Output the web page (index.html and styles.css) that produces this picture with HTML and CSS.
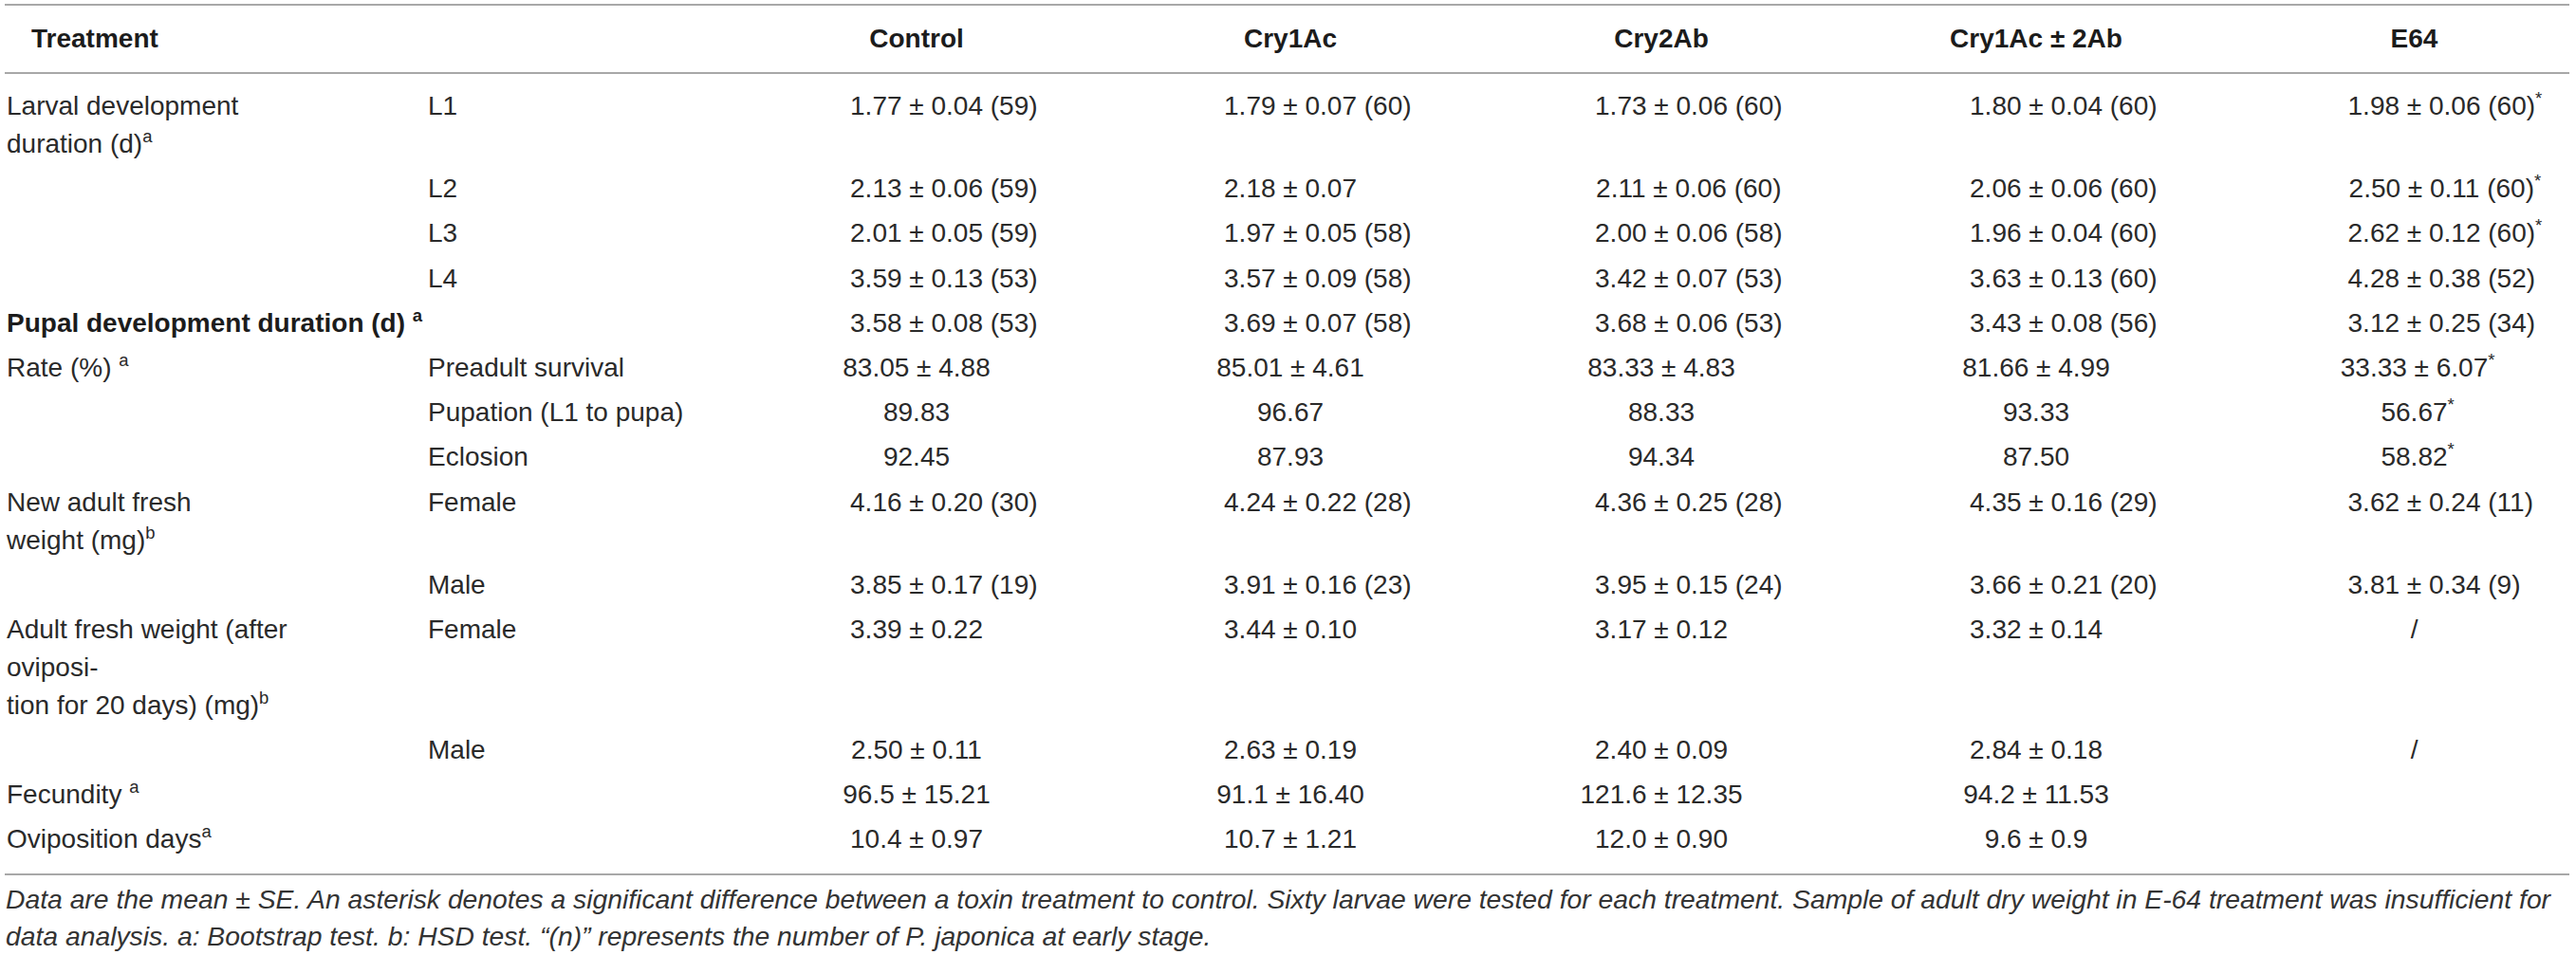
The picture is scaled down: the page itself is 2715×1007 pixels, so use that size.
FILE: index.html
```html
<!DOCTYPE html>
<html>
  <head>
    <meta charset="utf-8" />
    <title>Development of P. japonica under toxin treatments</title>
    <link rel="stylesheet" href="styles.css">
  </head>
  <body>
    <table class="data">
      <colgroup>
        <col class="col-label">
        <col class="col-sub">
        <col class="col-control">
        <col class="col-1ac">
        <col class="col-2ab">
        <col class="col-mix">
        <col class="col-e64">
      </colgroup>
      <thead>
        <tr>
          <th class="treat" colspan="2">Treatment</th>
          <th>Control</th>
          <th>Cry1Ac</th>
          <th>Cry2Ab</th>
          <th>Cry1Ac ± 2Ab</th>
          <th>E64</th>
        </tr>
      </thead>
      <tbody>
        <tr>
          <td class="label">Larval development<br>duration (d)<sup>a</sup></td>
          <td class="sub">L1</td>
          <td>1.77 ± 0.04<span class="n"> (59)</span></td>
          <td>1.79 ± 0.07<span class="n"> (60)</span></td>
          <td>1.73 ± 0.06<span class="n"> (60)</span></td>
          <td>1.80 ± 0.04<span class="n"> (60)</span></td>
          <td>1.98 ± 0.06<span class="n"> (60)<sup>*</sup></span></td>
        </tr>
        <tr>
          <td class="label"></td>
          <td class="sub">L2</td>
          <td>2.13 ± 0.06<span class="n"> (59)</span></td>
          <td>2.18 ± 0.07</td>
          <td>2.11 ± 0.06<span class="n"> (60)</span></td>
          <td>2.06 ± 0.06<span class="n"> (60)</span></td>
          <td>2.50 ± 0.11<span class="n"> (60)<sup>*</sup></span></td>
        </tr>
        <tr>
          <td class="label"></td>
          <td class="sub">L3</td>
          <td>2.01 ± 0.05<span class="n"> (59)</span></td>
          <td>1.97 ± 0.05<span class="n"> (58)</span></td>
          <td>2.00 ± 0.06<span class="n"> (58)</span></td>
          <td>1.96 ± 0.04<span class="n"> (60)</span></td>
          <td>2.62 ± 0.12<span class="n"> (60)<sup>*</sup></span></td>
        </tr>
        <tr>
          <td class="label"></td>
          <td class="sub">L4</td>
          <td>3.59 ± 0.13<span class="n"> (53)</span></td>
          <td>3.57 ± 0.09<span class="n"> (58)</span></td>
          <td>3.42 ± 0.07<span class="n"> (53)</span></td>
          <td>3.63 ± 0.13<span class="n"> (60)</span></td>
          <td>4.28 ± 0.38<span class="n"> (52)</span></td>
        </tr>
        <tr>
          <td class="label strong" colspan="2">Pupal development duration (d) <sup>a</sup></td>
          <td>3.58 ± 0.08<span class="n"> (53)</span></td>
          <td>3.69 ± 0.07<span class="n"> (58)</span></td>
          <td>3.68 ± 0.06<span class="n"> (53)</span></td>
          <td>3.43 ± 0.08<span class="n"> (56)</span></td>
          <td>3.12 ± 0.25<span class="n"> (34)</span></td>
        </tr>
        <tr>
          <td class="label">Rate (%) <sup>a</sup></td>
          <td class="sub">Preadult survival</td>
          <td>83.05 ± 4.88</td>
          <td>85.01 ± 4.61</td>
          <td>83.33 ± 4.83</td>
          <td>81.66 ± 4.99</td>
          <td>33.33 ± 6.07<span class="n"><sup>*</sup></span></td>
        </tr>
        <tr>
          <td class="label"></td>
          <td class="sub">Pupation (L1 to pupa)</td>
          <td>89.83</td>
          <td>96.67</td>
          <td>88.33</td>
          <td>93.33</td>
          <td>56.67<span class="n"><sup>*</sup></span></td>
        </tr>
        <tr>
          <td class="label"></td>
          <td class="sub">Eclosion</td>
          <td>92.45</td>
          <td>87.93</td>
          <td>94.34</td>
          <td>87.50</td>
          <td>58.82<span class="n"><sup>*</sup></span></td>
        </tr>
        <tr>
          <td class="label">New adult fresh<br>weight (mg)<sup>b</sup></td>
          <td class="sub">Female</td>
          <td>4.16 ± 0.20<span class="n"> (30)</span></td>
          <td>4.24 ± 0.22<span class="n"> (28)</span></td>
          <td>4.36 ± 0.25<span class="n"> (28)</span></td>
          <td>4.35 ± 0.16<span class="n"> (29)</span></td>
          <td>3.62 ± 0.24<span class="n"> (11)</span></td>
        </tr>
        <tr>
          <td class="label"></td>
          <td class="sub">Male</td>
          <td>3.85 ± 0.17<span class="n"> (19)</span></td>
          <td>3.91 ± 0.16<span class="n"> (23)</span></td>
          <td>3.95 ± 0.15<span class="n"> (24)</span></td>
          <td>3.66 ± 0.21<span class="n"> (20)</span></td>
          <td>3.81 ± 0.34<span class="n"> (9)</span></td>
        </tr>
        <tr>
          <td class="label">Adult fresh weight (after<br>oviposi-<br>tion for 20 days) (mg)<sup>b</sup></td>
          <td class="sub">Female</td>
          <td>3.39 ± 0.22</td>
          <td>3.44 ± 0.10</td>
          <td>3.17 ± 0.12</td>
          <td>3.32 ± 0.14</td>
          <td>/</td>
        </tr>
        <tr>
          <td class="label"></td>
          <td class="sub">Male</td>
          <td>2.50 ± 0.11</td>
          <td>2.63 ± 0.19</td>
          <td>2.40 ± 0.09</td>
          <td>2.84 ± 0.18</td>
          <td>/</td>
        </tr>
        <tr>
          <td class="label">Fecundity <sup>a</sup></td>
          <td class="sub"></td>
          <td>96.5 ± 15.21</td>
          <td>91.1 ± 16.40</td>
          <td>121.6 ± 12.35</td>
          <td>94.2 ± 11.53</td>
          <td></td>
        </tr>
        <tr>
          <td class="label">Oviposition days<sup>a</sup></td>
          <td class="sub"></td>
          <td>10.4 ± 0.97</td>
          <td>10.7 ± 1.21</td>
          <td>12.0 ± 0.90</td>
          <td>9.6 ± 0.9</td>
          <td></td>
        </tr>
      </tbody>
    </table>

    <p class="note">
      Data are the mean ± SE. An asterisk denotes a significant difference between a toxin treatment to control. Sixty larvae were tested for each treatment. Sample of adult dry weight in E-64 treatment was insufficient for data analysis. a: Bootstrap test. b: HSD test. “(n)” represents the number of P. japonica at early stage.
    </p>
  </body>
</html>
```

FILE: styles.css
```css
body {
  margin: 4px 7px 0 5px;
  font-family: 'Liberation Sans', Arial, sans-serif;
  color: #2A2A2A;
  background-color: #FFFFFF;
}

.data {
  border-collapse: collapse;
  table-layout: fixed;
  width: 2703px;
  border-top: 2px solid #A8A8A8;
  border-bottom: 2px solid #A8A8A8;
  font-size: 28px;
  line-height: 40px;
}

.col-label   { width: 440px; }
.col-sub     { width: 321px; }
.col-control { width: 400px; }
.col-1ac     { width: 388px; }
.col-2ab     { width: 394px; }
.col-mix     { width: 396px; }
.col-e64     { width: 364px; }

.data th {
  padding: 15px 0;
  font-weight: bold;
  color: #1C1C1C;
  text-align: center;
  white-space: nowrap;
  border-bottom: 2px solid #A8A8A8;
}

.data th.treat {
  text-align: left;
  padding-left: 28px;
}

.data td {
  padding: 3px 0 4.2px;
  text-align: center;
  vertical-align: top;
  white-space: nowrap;
}

.data td.label {
  text-align: left;
  padding-left: 2px;
}

.data td.sub {
  text-align: left;
  padding-left: 6px;
}

.data td.strong {
  font-weight: bold;
  color: #1C1C1C;
}

.data th:last-child,
.data td:last-child {
  padding-left: 37px;
}

.data tbody tr:first-child td {
  padding-top: 14px;
}

.data tbody tr:last-child td {
  padding-bottom: 16px;
}

/* sample size and asterisk hang to the right of the centred value */
.n {
  display: inline-block;
  width: 0;
  white-space: pre;
  text-align: left;
}

sup {
  font-size: 0.66em;
  line-height: 0;
  vertical-align: 0.6em;
}

.note {
  width: 2703px;
  margin: 6px 0 0 1px;
  font-size: 28.3px;
  line-height: 39px;
  font-style: italic;
  color: #333333;
}
```
